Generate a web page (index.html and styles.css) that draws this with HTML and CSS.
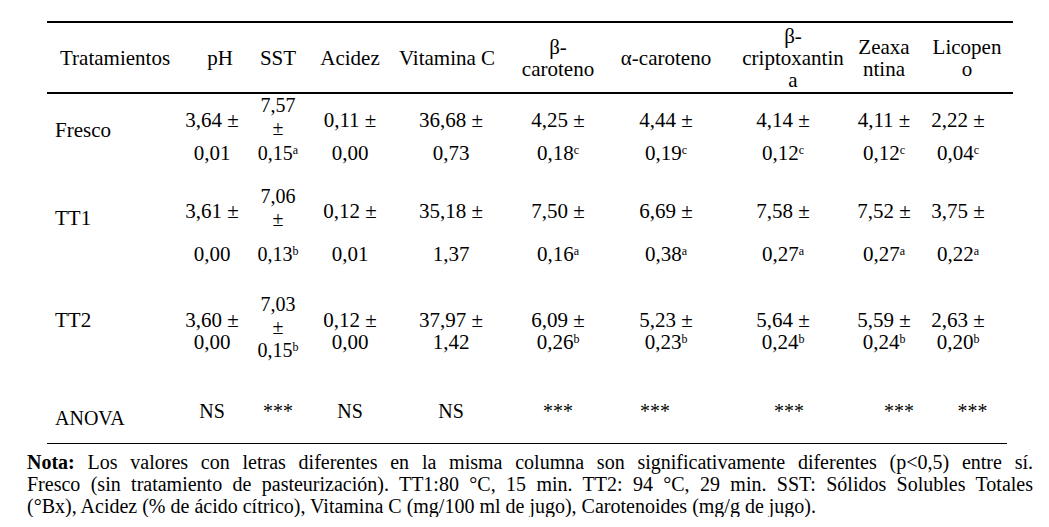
FILE: index.html
```html
<!DOCTYPE html>
<html lang="es">
<head>
<meta charset="utf-8">
<title>Tabla</title>
<link rel="stylesheet" href="styles.css">
</head>
<body>
<div class="page">
  <div class="row head">
    <div class="cell h first">Tratamientos</div>
    <div class="cell h ph">pH</div>
    <div class="cell h">SST</div>
    <div class="cell h">Acidez</div>
    <div class="cell h vitc">Vitamina C</div>
    <div class="cell h"><span>β-</span><span>caroteno</span></div>
    <div class="cell h">α-caroteno</div>
    <div class="cell h crip"><span>β-</span><span>criptoxantin</span><span>a</span></div>
    <div class="cell h"><span>Zeaxa</span><span>ntina</span></div>
    <div class="cell h lico"><span>Licopen</span><span>o</span></div>
  </div>

  <div class="row data fresco">
    <div class="cell lab">Fresco</div>
    <div class="cell v"><span class="ln">3,64 ±</span><span class="ln">0,01</span></div>
    <div class="cell s"><span class="ln">7,57</span><span class="ln l2">±</span><span class="ln l3">0,15<span class="sup">a</span></span></div>
    <div class="cell v"><span class="ln">0,11 ±</span><span class="ln">0,00</span></div>
    <div class="cell v"><span class="ln">36,68 ±</span><span class="ln">0,73</span></div>
    <div class="cell v"><span class="ln">4,25 ±</span><span class="ln">0,18<span class="sup">c</span></span></div>
    <div class="cell v"><span class="ln">4,44 ±</span><span class="ln">0,19<span class="sup">c</span></span></div>
    <div class="cell v"><span class="ln">4,14 ±</span><span class="ln">0,12<span class="sup">c</span></span></div>
    <div class="cell v"><span class="ln">4,11 ±</span><span class="ln">0,12<span class="sup">c</span></span></div>
    <div class="cell v last"><span class="ln">2,22 ±</span><span class="ln">0,04<span class="sup">c</span></span></div>
  </div>

  <div class="row data tt1">
    <div class="cell lab">TT1</div>
    <div class="cell v"><span class="ln">3,61 ±</span><span class="ln">0,00</span></div>
    <div class="cell s"><span class="ln">7,06</span><span class="ln l2">±</span><span class="ln l3">0,13<span class="sup">b</span></span></div>
    <div class="cell v"><span class="ln">0,12 ±</span><span class="ln">0,01</span></div>
    <div class="cell v"><span class="ln">35,18 ±</span><span class="ln">1,37</span></div>
    <div class="cell v"><span class="ln">7,50 ±</span><span class="ln">0,16<span class="sup">a</span></span></div>
    <div class="cell v"><span class="ln">6,69 ±</span><span class="ln">0,38<span class="sup">a</span></span></div>
    <div class="cell v"><span class="ln">7,58 ±</span><span class="ln">0,27<span class="sup">a</span></span></div>
    <div class="cell v"><span class="ln">7,52 ±</span><span class="ln">0,27<span class="sup">a</span></span></div>
    <div class="cell v last"><span class="ln">3,75 ±</span><span class="ln">0,22<span class="sup">a</span></span></div>
  </div>

  <div class="row data tt2">
    <div class="cell lab">TT2</div>
    <div class="cell v"><span class="ln">3,60 ±</span><span class="ln">0,00</span></div>
    <div class="cell s"><span class="ln">7,03</span><span class="ln l2">±</span><span class="ln l3">0,15<span class="sup">b</span></span></div>
    <div class="cell v"><span class="ln">0,12 ±</span><span class="ln">0,00</span></div>
    <div class="cell v"><span class="ln">37,97 ±</span><span class="ln">1,42</span></div>
    <div class="cell v"><span class="ln">6,09 ±</span><span class="ln">0,26<span class="sup">b</span></span></div>
    <div class="cell v"><span class="ln">5,23 ±</span><span class="ln">0,23<span class="sup">b</span></span></div>
    <div class="cell v"><span class="ln">5,64 ±</span><span class="ln">0,24<span class="sup">b</span></span></div>
    <div class="cell v"><span class="ln">5,59 ±</span><span class="ln">0,24<span class="sup">b</span></span></div>
    <div class="cell v last"><span class="ln">2,63 ±</span><span class="ln">0,20<span class="sup">b</span></span></div>
  </div>

  <div class="row anova">
    <div class="cell alab"><span class="tm">ANOVA</span></div>
    <div class="cell a"><span class="tm">NS</span></div>
    <div class="cell a"><span class="tm">***</span></div>
    <div class="cell a"><span class="tm">NS</span></div>
    <div class="cell a"><span class="tm">NS</span></div>
    <div class="cell a"><span class="tm">***</span></div>
    <div class="cell a alpha"><span class="tm">***</span></div>
    <div class="cell a crip-a"><span class="tm">***</span></div>
    <div class="cell a zea-a"><span class="tm">***</span></div>
    <div class="cell a"><span class="tm">***</span></div>
  </div>

  <div class="rule"></div>

  <div class="note">
    <div class="nl"><b>Nota:</b> Los valores con letras diferentes en la misma columna son significativamente diferentes (p&lt;0,5) entre sí.</div>
    <div class="nl">Fresco (sin tratamiento de pasteurización). TT1:80 °C, 15 min. TT2: 94 °C, 29 min. SST: Sólidos Solubles Totales</div>
    <div class="nl end">(°Bx), Acidez (% de ácido cítrico), Vitamina C (mg/100 ml de jugo), Carotenoides (mg/g de jugo).</div>
  </div>
</div>
</body>
</html>
```

FILE: styles.css
```css
html, body {
  margin: 0;
  padding: 0;
  background: #ffffff;
  color: #000000;
}

.page {
  padding-top: 21px;
  font-family: "Liberation Serif", "Times New Roman", serif;
  font-size: 21px;
  line-height: 22px;
}

.row {
  display: grid;
  grid-template-columns: 133px 64px 68px 76px 126px 88px 128px 106px 96px 81px;
  width: 966px;
  margin-left: 47px;
}

.cell {
  display: flex;
  flex-direction: column;
  align-items: center;
  white-space: nowrap;
}

/* header */
.head {
  height: 69px;
  border-top: 2px solid #000;
  border-bottom: 2px solid #000;
}
.head .h {
  justify-content: center;
}
.head .first {
  align-items: flex-start;
  padding-left: 13px;
}
.head .ph { padding-left: 16px; }
.head .vitc { padding-right: 8px; }
.head .crip { padding-left: 20px; }
.head .lico { padding-right: 11px; }

/* data rows */
.ln {
  display: block;
  line-height: 22px;
}
.s {
  font-size: 20px;
}
.s .ln {
  line-height: 23px;
}
.lab {
  align-items: flex-start;
  padding-left: 8px;
}
.last { padding-right: 29px; }

.sup {
  font-size: 12px;
  line-height: 0;
  vertical-align: 6px;
}

.fresco { height: 91px; }
.fresco .lab { padding-top: 25px; }
.fresco .v { padding-top: 15px; }
.fresco .v .ln + .ln { margin-top: 11px; }
.fresco .s .l3 { margin-top: 2px; }

.tt1 { height: 108px; }
.tt1 .lab { padding-top: 22px; }
.tt1 .v { padding-top: 15px; }
.tt1 .v .ln + .ln { margin-top: 21px; }
.tt1 .s .l3 { margin-top: 12px; }

.tt2 { height: 97px; }
.tt2 .lab { padding-top: 16px; }
.tt2 .v { padding-top: 16px; }

/* anova */
.anova {
  height: 53px;
  font-size: 20px;
}
.tm {
  display: inline-block;
  line-height: 22px;
  transform: scaleY(1.1);
}
.anova .alab {
  align-items: flex-start;
  padding-left: 8px;
  padding-top: 16px;
}
.anova .a { padding-top: 9px; }
.anova .alpha { padding-right: 22px; }
.anova .crip-a { padding-left: 12px; }
.anova .zea-a { padding-left: 30px; }

.rule {
  width: 960px;
  margin-left: 47px;
  border-top: 1px solid #000;
}

/* note */
.note {
  width: 1006px;
  margin-left: 27px;
  margin-top: 7px;
  font-size: 20px;
  line-height: 22px;
}
.nl {
  white-space: nowrap;
  text-align: justify;
  text-align-last: justify;
}
.nl.end {
  text-align-last: left;
}
```
